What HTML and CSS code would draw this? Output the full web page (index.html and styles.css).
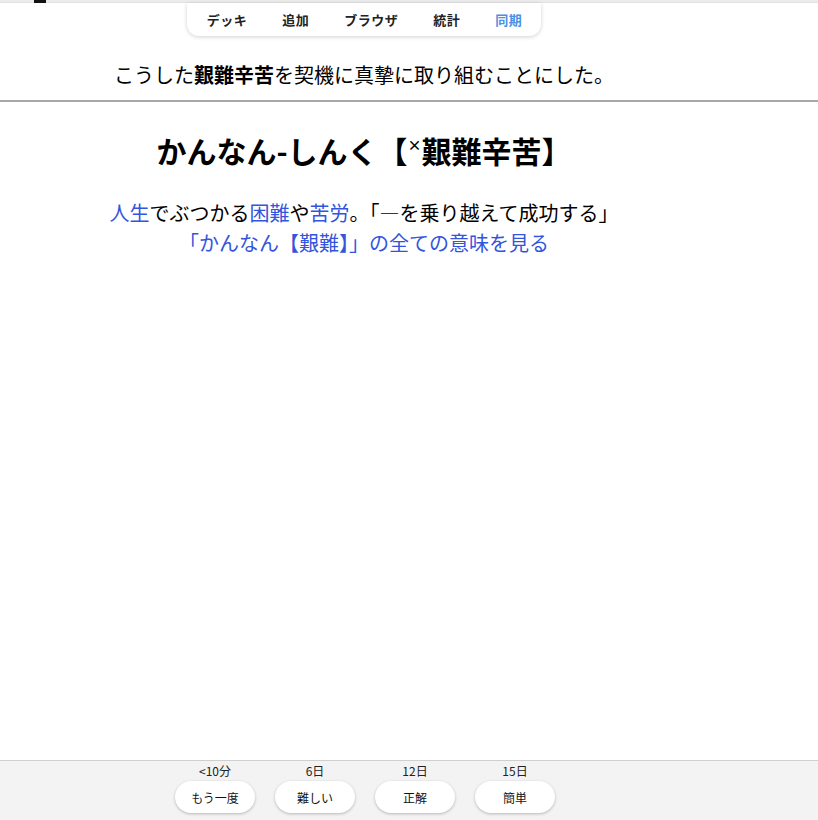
FILE: index.html
```html
<!DOCTYPE html>
<html>
<head>
    <title>Anki Review</title>
    <link rel="stylesheet" href="styles.css">
</head>
<body>
    <div class="topbar"><span class="tab-mark"></span></div>
    <main class="page">
        <div class="nav-wrap">
            <nav class="nav">
                <a class="nav-item">デッキ</a>
                <a class="nav-item">追加</a>
                <a class="nav-item">ブラウザ</a>
                <a class="nav-item">統計</a>
                <a class="nav-item active">同期</a>
            </nav>
        </div>

        <div class="question">こうした<b>艱難辛苦</b>を契機に真摯に取り組むことにした。</div>
    </main>

    <hr class="answer-line">

    <main class="page answer">
        <h1 class="word">かんなん-しんく【<span class="mark">×</span>艱難辛苦】</h1>
        <div class="meaning">
            <a class="link">人生</a>でぶつかる<a class="link">困難</a>や<a class="link">苦労</a>。「―を乗り越えて成功する」
        </div>
        <div class="meaning"><a class="link">「かんなん【艱難】」の全ての意味を見る</a></div>
    </main>

    <footer class="bottom">
        <div class="buttons">
            <div class="ease">
                <span class="due">&lt;10分</span>
                <button class="ease-btn">もう一度</button>
            </div>
            <div class="ease">
                <span class="due">6日</span>
                <button class="ease-btn">難しい</button>
            </div>
            <div class="ease">
                <span class="due">12日</span>
                <button class="ease-btn">正解</button>
            </div>
            <div class="ease">
                <span class="due">15日</span>
                <button class="ease-btn">簡単</button>
            </div>
        </div>
    </footer>
</body>
</html>
```

FILE: styles.css
```css
* {
    margin: 0;
    padding: 0;
    box-sizing: border-box;
}

body {
    min-height: 100vh;
    display: flex;
    flex-direction: column;
    font-family: 'Noto Sans CJK JP', 'Noto Sans', sans-serif;
    color: black;
    background: white;
}

.topbar {
    height: 3px;
    background: #ececec;
    border-bottom: 1px solid #e2e2e2;
}

.tab-mark {
    display: block;
    width: 12px;
    height: 3px;
    margin-left: 34px;
    background: #111;
}

.page {
    width: 728px;
    text-align: center;
}

.nav-wrap {
    display: flex;
    justify-content: center;
}

.nav {
    display: flex;
    gap: 35px;
    height: 33px;
    align-items: center;
    padding: 0 19px 0 20px;
    background: white;
    border-radius: 0 0 12px 12px;
    box-shadow: 0 1px 4px rgba(0, 0, 0, 0.18);
}

.nav-item {
    font-size: 13px;
    font-weight: bold;
    letter-spacing: 0.5px;
    color: #222;
    cursor: pointer;
}

.nav-item.active {
    color: #4a90e2;
}

.question {
    font-size: 20px;
    line-height: 30px;
    margin-top: 24px;
    margin-bottom: 10px;
}

.answer-line {
    border: none;
    border-top: 2px solid #a8a8a8;
    margin: 0;
}

.answer {
    flex: 1;
}

.word {
    font-size: 30px;
    font-weight: bold;
    line-height: 36px;
    margin-top: 24px;
    margin-bottom: 30px;
}

.mark {
    font-size: 14px;
    vertical-align: 13px;
}

.meaning {
    font-size: 20px;
    line-height: 30px;
}

.link {
    color: #3355dd;
    cursor: pointer;
}

.bottom {
    height: 60px;
    background: #f3f3f3;
    border-top: 1px solid #cfcfcf;
}

.buttons {
    width: 730px;
    display: flex;
    justify-content: center;
}

.ease {
    width: 100px;
    display: flex;
    flex-direction: column;
    align-items: center;
}

.due {
    font-size: 12px;
    line-height: 18px;
    margin-top: 1px;
    color: #222;
}

.ease-btn {
    width: 80px;
    height: 32px;
    margin-top: 1px;
    border: none;
    border-radius: 16px;
    background: white;
    font-family: inherit;
    font-size: 12px;
    color: #111;
    box-shadow: 0 1px 3px rgba(0, 0, 0, 0.25);
    cursor: pointer;
}
```
